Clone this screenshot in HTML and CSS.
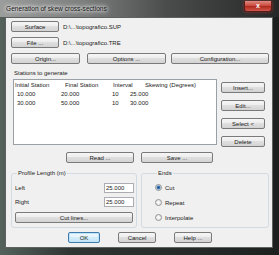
FILE: index.html
```html
<!DOCTYPE html>
<html>
<head>
<meta charset="utf-8">
<link rel="stylesheet" href="styles.css">
</head>
<body>
<div class="window">
  <div class="titlebar">
    <span class="title">Generation of skew cross-sections</span>
    <span class="close">x</span>
  </div>
  <div class="client">
    <div class="row">
      <div class="btn w-path">Surface</div>
      <span class="path">D:\...\topografico.SUP</span>
    </div>
    <div class="row gap-top">
      <div class="btn w-path">File ...</div>
      <span class="path">D:\...\topografico.TRE</span>
    </div>
    <div class="row gap-top">
      <div class="btn w-origin">Origin...</div>
      <div class="btn w-options">Options ...</div>
      <div class="btn w-config">Configuration...</div>
    </div>
    <div class="label">Stations to generate</div>
    <div class="stations">
      <div class="list">
        <div class="lrow head">
          <span>Initial Station</span><span>Final Station</span><span>Interval</span><span>Skewing (Degrees)</span>
        </div>
        <div class="lrow data">
          <span>10.000</span><span>20.000</span><span>10</span><span>25.000</span>
        </div>
        <div class="lrow data">
          <span>30.000</span><span>50.000</span><span>10</span><span>30.000</span>
        </div>
      </div>
      <div class="side">
        <div class="btn">Insert...</div>
        <div class="btn">Edit...</div>
        <div class="btn">Select &lt;</div>
        <div class="btn">Delete</div>
      </div>
    </div>
    <div class="row rs">
      <div class="btn w-read">Read ...</div>
      <div class="btn w-save">Save ...</div>
    </div>
    <div class="groups">
      <fieldset class="group profile">
        <legend>Profile Length (m)</legend>
        <div class="frow"><span>Left</span><span class="tb">25.000</span></div>
        <div class="frow"><span>Right</span><span class="tb">25.000</span></div>
        <div class="btn cut">Cut lines...</div>
      </fieldset>
      <fieldset class="group ends">
        <legend>Ends</legend>
        <div class="rrow"><span class="radio on"></span><span>Cut</span></div>
        <div class="rrow"><span class="radio"></span><span>Repeat</span></div>
        <div class="rrow"><span class="radio"></span><span>Interpolate</span></div>
      </fieldset>
    </div>
    <div class="row actions">
      <div class="btn default w-ok">OK</div>
      <div class="btn w-cancel">Cancel</div>
      <div class="btn w-help">Help ...</div>
    </div>
  </div>
</div>
</body>
</html>
```
FILE: styles.css
```css
html, body {
  margin: 0;
  padding: 0;
}
body {
  font-family: "Liberation Sans", Arial, sans-serif;
  font-size: 6px;
  color: #222;
  background: #1d1f1f;
}
.window {
  width: 279px;
  height: 255px;
  display: flex;
  flex-direction: column;
  background: linear-gradient(to right, #55625c 0%, #2f3533 25%, #1e2020 100%);
}
.titlebar {
  height: 17px;
  display: flex;
  align-items: center;
  padding: 0 7px 0 6px;
  background: linear-gradient(to right, #9a9d9c 0%, #7c7f7e 30%, #4a4c4c 60%, #262828 100%);
}
.title {
  font-size: 6.6px;
  color: #111;
  text-shadow: 0 0 3px #fff, 0 0 5px #fff, 0 0 6px rgba(255,255,255,0.8);
}
.close {
  margin-left: auto;
  width: 26px;
  height: 10px;
  margin-top: -5px;
  border: 1px solid #5a1d1d;
  border-top: none;
  border-radius: 0 0 3px 3px;
  background: linear-gradient(#e08a80, #c9463a 50%, #b02b20 55%, #d0584a);
  color: #fff;
  font-size: 7px;
  font-weight: bold;
  display: flex;
  align-items: center;
  justify-content: center;
  box-shadow: 0 0 3px rgba(220,60,40,0.6);
}
.client {
  flex: 1;
  margin: 0 6px 7px 5px;
  background: #f0f0f0;
  border: 1px solid #5d6160;
  padding: 3px 3px 0 5px;
  display: flex;
  flex-direction: column;
}
.row {
  display: flex;
  align-items: center;
  height: 11px;
}
.gap-top { margin-top: 5px; }
.btn {
  box-sizing: border-box;
  height: 11px;
  border: 1px solid #7a7a7a;
  border-radius: 2px;
  background: linear-gradient(#f6f6f6, #ededed 45%, #dfdfdf 50%, #d3d3d3);
  display: flex;
  align-items: center;
  justify-content: center;
  white-space: nowrap;
  color: #222;
}
.w-path { width: 48px; }
.path { margin-left: 4px; }
.w-origin { width: 69px; }
.w-options { width: 79px; margin-left: 7px; }
.w-config { width: 98px; margin-left: 5px; }
.label {
  margin-top: 5px;
  line-height: 8px;
  padding-left: 3px;
}
.stations {
  margin-top: 2px;
  display: flex;
  align-items: flex-start;
}
.list {
  box-sizing: border-box;
  width: 204px;
  height: 66px;
  margin-left: 2px;
  background: #fff;
  border: 1px solid #9aa0a6;
  padding-top: 1px;
}
.lrow {
  display: grid;
  line-height: 9px;
  white-space: nowrap;
}
.head {
  grid-template-columns: 50px 48px 32px auto;
  padding-left: 1px;
}
.data {
  grid-template-columns: 44px 51px 18px auto;
  padding-left: 3px;
}
.side {
  width: 44px;
  margin-left: 4px;
  margin-top: 3px;
  display: flex;
  flex-direction: column;
  gap: 7px;
}
.rs { margin-top: 5px; }
.w-read { width: 68px; margin-left: 55px; }
.w-save { width: 72px; margin-left: 7px; }
.groups {
  margin-top: 6px;
  display: flex;
  gap: 4px;
}
.group {
  margin: 0;
  border: 1px solid #d2dbe2;
  border-radius: 3px;
  min-width: 0;
}
.group legend {
  padding: 0 1px;
  margin-left: 2px;
  line-height: 8px;
}
.profile {
  width: 126px;
  box-sizing: border-box;
  padding: 6px 2px 4px 3px;
}
.frow {
  display: flex;
  align-items: center;
  justify-content: space-between;
  height: 10px;
}
.frow + .frow { margin-top: 4px; }
.tb {
  box-sizing: border-box;
  width: 30px;
  height: 10px;
  border: 1px solid #abadb3;
  background: #fff;
  padding-left: 1px;
  line-height: 8px;
}
.cut {
  margin-top: 5px;
  margin-right: 1px;
}
.ends {
  width: 128px;
  box-sizing: border-box;
  padding: 6px 2px 4px 13px;
}
.rrow {
  display: flex;
  align-items: center;
  height: 9px;
}
.rrow + .rrow { margin-top: 6px; }
.radio {
  box-sizing: border-box;
  width: 7px;
  height: 7px;
  border-radius: 50%;
  border: 1px solid #949494;
  background: radial-gradient(circle, #ffffff, #dcdcdc);
  margin-right: 3px;
}
.radio.on {
  background: radial-gradient(circle, #1f4f8a 0, #3f76b4 1.4px, #b9cfe4 2.2px, #f4f4f4 2.8px);
}
.actions { margin-top: 4px; }
.w-ok { width: 32px; margin-left: 57px; }
.w-cancel { width: 38px; margin-left: 18px; }
.w-help { width: 38px; margin-left: 18px; }
.btn.default {
  border-color: #3d7bad;
  box-shadow: inset 0 0 0 1px #bfe3f7;
  background: linear-gradient(#f2f9fd, #e4f3fc 45%, #d3ecfa 50%, #c6e5f7);
}
```
